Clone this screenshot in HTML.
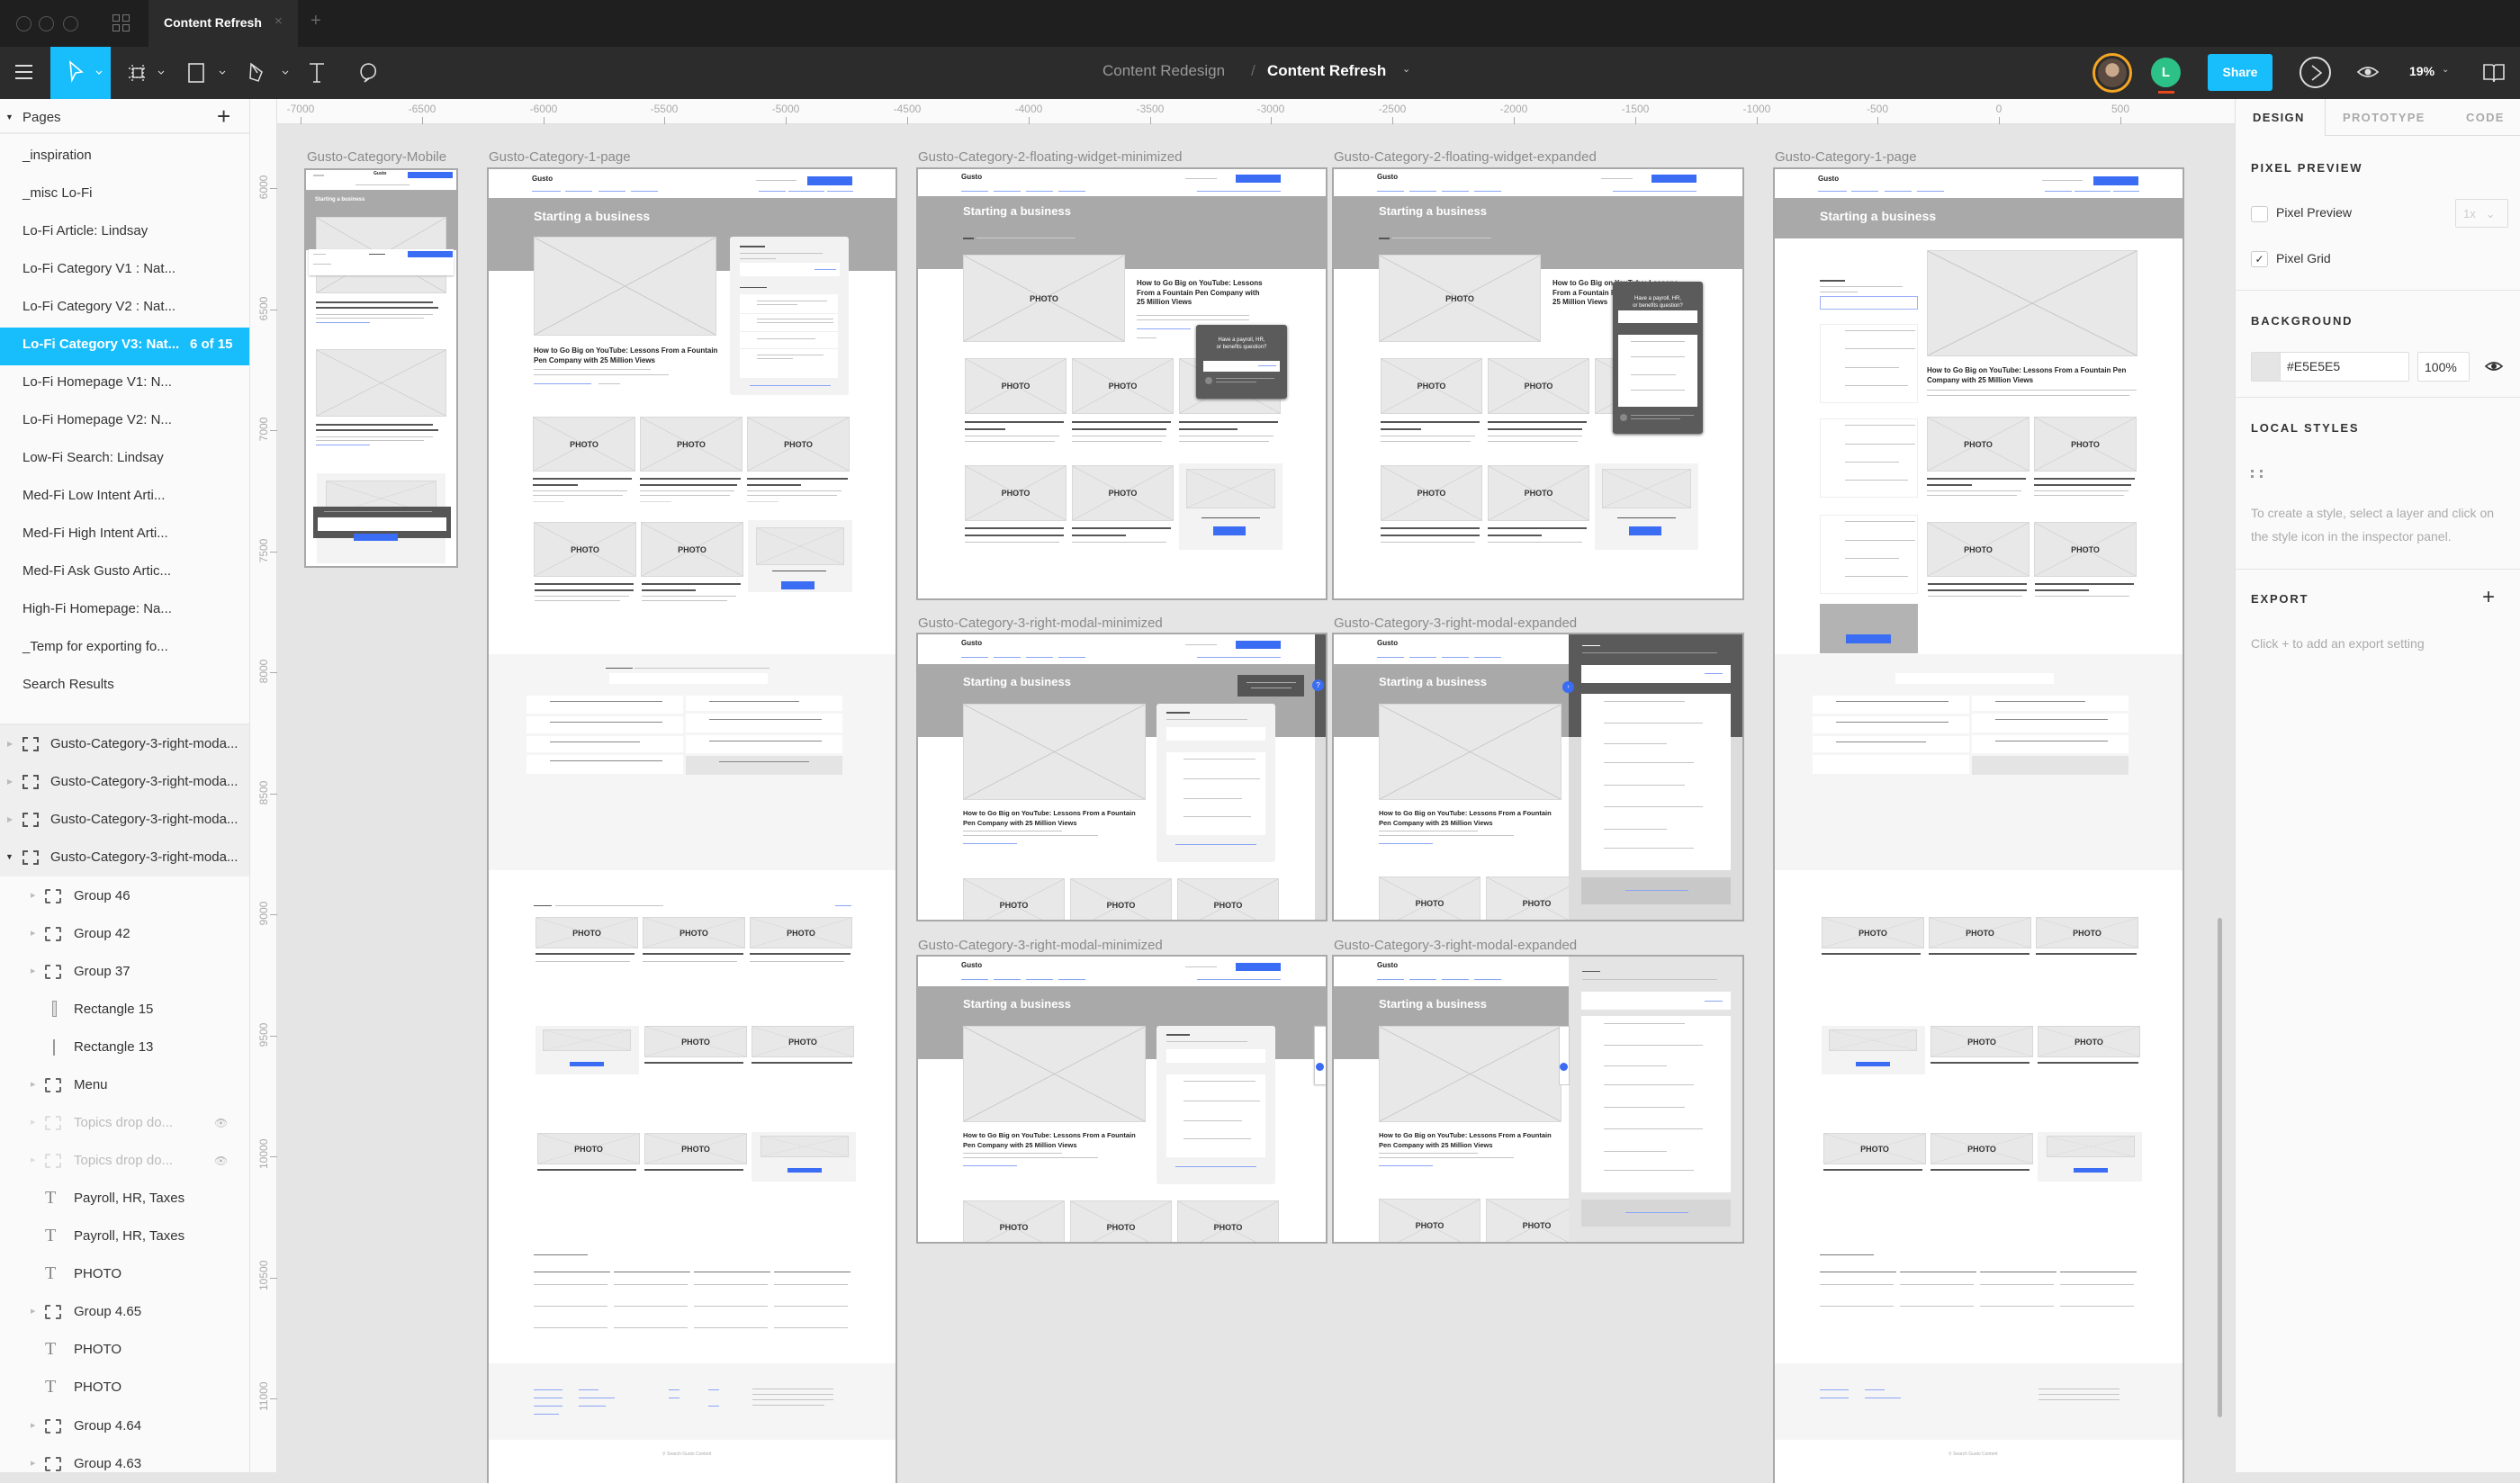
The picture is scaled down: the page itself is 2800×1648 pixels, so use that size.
<!DOCTYPE html>
<html><head><meta charset="utf-8">
<style>
*{box-sizing:border-box;margin:0;padding:0}
body{width:2800px;height:1636px;overflow:hidden;background:#e5e5e5;font-family:"Liberation Sans",Arial,sans-serif;position:relative}
.a{position:absolute}
.x{position:absolute;background:linear-gradient(to top right,transparent 49.7%,#c4c4c4 49.85%,#c4c4c4 50.15%,transparent 50.3%),linear-gradient(to bottom right,transparent 49.7%,#c4c4c4 49.85%,#c4c4c4 50.15%,transparent 50.3%),#e8e8e8;border:1px solid #d8d8d8;display:flex;align-items:center;justify-content:center;font-size:9px;font-weight:bold;color:#333}
.b{position:absolute;height:2px;background:#c4c4c4}
.bb{position:absolute;height:2px;background:#8aa5f5}
.bk{position:absolute;height:3px;background:#555}
.btn{position:absolute;background:#3a6cf4}
.fr{position:absolute;background:#fff;outline:2px solid #a8a8a8;overflow:hidden}
.hero{position:absolute;left:0;right:0;background:#a9a9a9}
.ht{position:absolute;color:#fff;font-weight:bold;font-size:14px;white-space:nowrap}
.logo{position:absolute;font-size:8px;font-weight:bold;color:#222}
.hl{position:absolute;font-size:8px;font-weight:bold;color:#222;line-height:11px}
.lbl{position:absolute;font-size:15px;color:#8a8a8a;white-space:nowrap}
.card{position:absolute;background:#f2f2f2;border-radius:3px}
.wh{position:absolute;background:#fff}
.pg{position:absolute;left:25px;font-size:15px;color:#333;white-space:nowrap}
.ly{position:absolute;font-size:15px;color:#333;white-space:nowrap}
.rl{position:absolute;top:114px;width:60px;text-align:center;font-size:12px;color:#aaa}
.rt{position:absolute;top:130px;width:1px;height:8px;background:#aaa}
.vl{position:absolute;left:278px;width:30px;font-size:12px;color:#aaa;transform:rotate(-90deg);text-align:center}
.sh{position:absolute;left:2501px;font-size:13px;font-weight:bold;letter-spacing:1.8px;color:#333}
.fi{position:absolute;width:18px;height:16px;border:2px dashed #555}
.gi{position:absolute;width:18px;height:16px;border:2px dashed #666;border-radius:2px}
</style></head><body>

<!-- title bar -->
<div class="a" style="left:0;top:0;width:2800px;height:52px;background:#1f1f1f"></div>
<div class="a" style="left:18px;top:18px;width:17px;height:17px;border:1.5px solid #555;border-radius:50%"></div>
<div class="a" style="left:43px;top:18px;width:17px;height:17px;border:1.5px solid #555;border-radius:50%"></div>
<div class="a" style="left:70px;top:18px;width:17px;height:17px;border:1.5px solid #555;border-radius:50%"></div>
<div class="a" style="left:125px;top:16px;width:8px;height:8px;border:1.5px solid #777"></div>
<div class="a" style="left:136px;top:16px;width:8px;height:8px;border:1.5px solid #777"></div>
<div class="a" style="left:125px;top:27px;width:8px;height:8px;border:1.5px solid #777"></div>
<div class="a" style="left:136px;top:27px;width:8px;height:8px;border:1.5px solid #777"></div>
<div class="a" style="left:165px;top:0;width:166px;height:52px;background:#2c2c2c"></div>
<div class="a" style="left:182px;top:17px;font-size:14px;font-weight:bold;color:#fff">Content Refresh</div>
<div class="a" style="left:305px;top:15px;font-size:15px;color:#666">×</div>
<div class="a" style="left:345px;top:12px;font-size:20px;color:#666">+</div>

<!-- toolbar -->
<div class="a" style="left:0;top:52px;width:2800px;height:58px;background:#2c2c2c"></div>
<div class="a" style="left:17px;top:72px;width:19px;height:2px;background:#ddd;box-shadow:0 7px 0 #ddd,0 14px 0 #ddd"></div>
<div class="a" style="left:56px;top:52px;width:67px;height:58px;background:#18bdfb"></div>
<svg class="a" style="left:72px;top:66px" width="50" height="30" viewBox="0 0 50 30"><path d="M6 3 L19 14 L12 15 L8 23 Z" fill="none" stroke="#fff" stroke-width="1.6"/><path d="M35 13 l3 3 l3 -3" fill="none" stroke="#fff" stroke-width="1.2"/></svg>
<svg class="a" style="left:140px;top:66px" width="340" height="30" viewBox="0 0 340 30"><path d="M7 6 v18 M19 6 v18 M3 10 h20 M3 20 h20" stroke="#ddd" stroke-width="1.4" stroke-dasharray="2 2" fill="none"/><rect x="8" y="10" width="10" height="10" fill="none" stroke="#ddd" stroke-width="1.4"/><path d="M36 13 l3 3 l3-3" stroke="#ddd" fill="none"/>
<rect x="70" y="5" width="16" height="20" fill="none" stroke="#ddd" stroke-width="1.6"/><path d="M104 13 l3 3 l3-3" stroke="#ddd" fill="none"/>
<path d="M139 5 l12 9 l-4 10 l-9-3 z M140 6 l6 9" fill="none" stroke="#ddd" stroke-width="1.5"/><path d="M174 13 l3 3 l3-3" stroke="#ddd" fill="none"/>
<path d="M204 5 h16 M212 5 v20 M208 25 h8" stroke="#ddd" stroke-width="1.6" fill="none"/>
<path d="M269 22 c-10 0 -11 -16 0 -17 c11 0 11 16 0 16 l-4 4 z" fill="none" stroke="#ddd" stroke-width="1.6"/></svg>
<div class="a" style="left:1225px;top:69px;font-size:17px;color:#999">Content Redesign</div>
<div class="a" style="left:1390px;top:69px;font-size:17px;color:#666">/</div>
<div class="a" style="left:1408px;top:69px;font-size:17px;font-weight:bold;color:#fff">Content Refresh</div>
<div class="a" style="left:1558px;top:70px;font-size:11px;color:#ccc">⌄</div>
<div class="a" style="left:2325px;top:59px;width:44px;height:44px;border:3px solid #f5a623;border-radius:50%;background:#2c2c2c"></div>
<div class="a" style="left:2331px;top:65px;width:32px;height:32px;border-radius:50%;background:radial-gradient(circle at 50% 40%,#c9a88c 0 30%,#5a4a40 31% 100%)"></div>
<div class="a" style="left:2390px;top:64px;width:33px;height:33px;border-radius:50%;background:#2cc287;color:#fff;font-size:15px;font-weight:bold;text-align:center;line-height:33px">L</div>
<div class="a" style="left:2398px;top:101px;width:18px;height:3px;background:#e8481c"></div>
<div class="a" style="left:2453px;top:60px;width:72px;height:41px;background:#18bdfb;border-radius:3px;color:#fff;font-weight:bold;font-size:14px;text-align:center;line-height:41px">Share</div>
<div class="a" style="left:2555px;top:63px;width:35px;height:35px;border:2px solid #ddd;border-radius:50%"></div>
<svg class="a" style="left:2566px;top:71px" width="16" height="20"><path d="M3 2 L13 10 L3 18" fill="none" stroke="#ddd" stroke-width="1.6"/></svg>
<svg class="a" style="left:2618px;top:70px" width="26" height="20"><path d="M2 10 Q13 0 24 10 Q13 20 2 10 Z" fill="none" stroke="#ddd" stroke-width="1.6"/><circle cx="13" cy="10" r="3.5" fill="#ddd"/></svg>
<div class="a" style="left:2677px;top:71px;font-size:14px;font-weight:bold;color:#fff">19%</div>
<div class="a" style="left:2713px;top:72px;font-size:10px;color:#ccc">⌄</div>
<svg class="a" style="left:2758px;top:69px" width="26" height="24"><path d="M2 3 h8 q3 0 3 3 v16 q0 -3 -3 -3 h-8 z M24 3 h-8 q-3 0 -3 3 v16 q0 -3 3 -3 h8 z" fill="none" stroke="#ddd" stroke-width="1.6"/></svg>

<!-- left panel -->
<div class="a" style="left:0;top:110px;width:278px;height:1526px;background:#fafafa"></div>
<div class="a" style="left:0;top:147px;width:278px;height:2px;background:#eaeaea"></div>
<div class="a" style="left:6px;top:125px;font-size:9px;color:#333">▼</div>
<div class="a" style="left:25px;top:122px;font-size:15px;color:#333">Pages</div>
<div class="a" style="left:241px;top:114px;font-size:26px;font-weight:300;color:#333">+</div>
<div class="pg" style="top:164px">_inspiration</div>
<div class="pg" style="top:206px">_misc Lo-Fi</div>
<div class="pg" style="top:248px">Lo-Fi Article: Lindsay</div>
<div class="pg" style="top:290px">Lo-Fi Category V1 : Nat...</div>
<div class="pg" style="top:332px">Lo-Fi Category V2 : Nat...</div>
<div class="a" style="left:0;top:364px;width:278px;height:42px;background:#18bdfb"></div>
<div class="pg" style="top:374px;color:#fff;font-weight:bold">Lo-Fi Category V3: Nat...</div>
<div class="a" style="left:211px;top:374px;font-size:15px;color:#fff;font-weight:bold">6 of 15</div>
<div class="pg" style="top:416px">Lo-Fi Homepage V1: N...</div>
<div class="pg" style="top:458px">Lo-Fi Homepage V2: N...</div>
<div class="pg" style="top:500px">Low-Fi Search: Lindsay</div>
<div class="pg" style="top:542px">Med-Fi Low Intent Arti...</div>
<div class="pg" style="top:584px">Med-Fi High Intent Arti...</div>
<div class="pg" style="top:626px">Med-Fi Ask Gusto Artic...</div>
<div class="pg" style="top:668px">High-Fi Homepage: Na...</div>
<div class="pg" style="top:710px">_Temp for exporting fo...</div>
<div class="pg" style="top:752px">Search Results</div>
<div class="a" style="left:0;top:804px;width:278px;height:2px;background:#eaeaea"></div>
<div class="a" style="left:0;top:806px;width:278px;height:168px;background:#efefef"></div>
<div class="a" style="left:8px;top:822px;font-size:8px;color:#bbb">▶</div><div class="fi" style="left:25px;top:819px"></div><div class="ly" style="left:56px;top:818px">Gusto-Category-3-right-moda...</div>
<div class="a" style="left:8px;top:864px;font-size:8px;color:#bbb">▶</div><div class="fi" style="left:25px;top:861px"></div><div class="ly" style="left:56px;top:860px">Gusto-Category-3-right-moda...</div>
<div class="a" style="left:8px;top:906px;font-size:8px;color:#bbb">▶</div><div class="fi" style="left:25px;top:903px"></div><div class="ly" style="left:56px;top:902px">Gusto-Category-3-right-moda...</div>
<div class="a" style="left:6px;top:947px;font-size:9px;color:#333">▼</div><div class="fi" style="left:25px;top:945px"></div><div class="ly" style="left:56px;top:944px">Gusto-Category-3-right-moda...</div>
<div class="a" style="left:34px;top:991px;font-size:7px;color:#bbb">▶</div><div class="gi" style="left:50px;top:988px"></div><div class="ly" style="left:82px;top:987px">Group 46</div>
<div class="a" style="left:34px;top:1033px;font-size:7px;color:#bbb">▶</div><div class="gi" style="left:50px;top:1030px"></div><div class="ly" style="left:82px;top:1029px">Group 42</div>
<div class="a" style="left:34px;top:1075px;font-size:7px;color:#bbb">▶</div><div class="gi" style="left:50px;top:1072px"></div><div class="ly" style="left:82px;top:1071px">Group 37</div>
<div class="a" style="left:58px;top:1112px;width:5px;height:18px;border:1px solid #999;background:#ddd"></div><div class="ly" style="left:82px;top:1113px">Rectangle 15</div>
<div class="a" style="left:59px;top:1155px;width:2px;height:18px;background:#999"></div><div class="ly" style="left:82px;top:1155px">Rectangle 13</div>
<div class="a" style="left:34px;top:1201px;font-size:7px;color:#bbb">▶</div><div class="gi" style="left:50px;top:1198px"></div><div class="ly" style="left:82px;top:1197px">Menu</div>
<div class="a" style="left:34px;top:1243px;font-size:7px;color:#ddd">▶</div><div class="gi" style="left:50px;top:1240px;border-color:#ddd"></div><div class="ly" style="left:82px;top:1239px;color:#bbb">Topics drop do...</div><div class="a" style="left:238px;top:1241px;font-size:12px;color:#bbb">👁︎</div>
<div class="a" style="left:34px;top:1285px;font-size:7px;color:#ddd">▶</div><div class="gi" style="left:50px;top:1282px;border-color:#ddd"></div><div class="ly" style="left:82px;top:1281px;color:#bbb">Topics drop do...</div><div class="a" style="left:238px;top:1283px;font-size:12px;color:#bbb">👁︎</div>
<div class="ly" style="left:50px;top:1320px;font-size:20px;color:#888;font-family:'Liberation Serif',serif">T</div><div class="ly" style="left:82px;top:1323px">Payroll, HR, Taxes</div>
<div class="ly" style="left:50px;top:1362px;font-size:20px;color:#888;font-family:'Liberation Serif',serif">T</div><div class="ly" style="left:82px;top:1365px">Payroll, HR, Taxes</div>
<div class="ly" style="left:50px;top:1404px;font-size:20px;color:#888;font-family:'Liberation Serif',serif">T</div><div class="ly" style="left:82px;top:1407px">PHOTO</div>
<div class="a" style="left:34px;top:1453px;font-size:7px;color:#bbb">▶</div><div class="gi" style="left:50px;top:1450px"></div><div class="ly" style="left:82px;top:1449px">Group 4.65</div>
<div class="ly" style="left:50px;top:1488px;font-size:20px;color:#888;font-family:'Liberation Serif',serif">T</div><div class="ly" style="left:82px;top:1491px">PHOTO</div>
<div class="ly" style="left:50px;top:1530px;font-size:20px;color:#888;font-family:'Liberation Serif',serif">T</div><div class="ly" style="left:82px;top:1533px">PHOTO</div>
<div class="a" style="left:34px;top:1580px;font-size:7px;color:#bbb">▶</div><div class="gi" style="left:50px;top:1577px"></div><div class="ly" style="left:82px;top:1576px">Group 4.64</div>
<div class="a" style="left:34px;top:1622px;font-size:7px;color:#bbb">▶</div><div class="gi" style="left:50px;top:1619px"></div><div class="ly" style="left:82px;top:1618px">Group 4.63</div>
<div class="a" style="left:277px;top:110px;width:1px;height:1526px;background:#e2e2e2"></div>

<!-- rulers -->
<div class="a" style="left:278px;top:110px;width:2205px;height:28px;background:#fafafa;border-bottom:1px solid #e0e0e0"></div>
<div class="a" style="left:278px;top:110px;width:30px;height:1526px;background:#fafafa;border-right:1px solid #e0e0e0"></div>
<div class="rl" style="left:304px">-7000</div><div class="rt" style="left:334px"></div>
<div class="rl" style="left:439px">-6500</div><div class="rt" style="left:469px"></div>
<div class="rl" style="left:574px">-6000</div><div class="rt" style="left:604px"></div>
<div class="rl" style="left:708px">-5500</div><div class="rt" style="left:738px"></div>
<div class="rl" style="left:843px">-5000</div><div class="rt" style="left:873px"></div>
<div class="rl" style="left:978px">-4500</div><div class="rt" style="left:1008px"></div>
<div class="rl" style="left:1113px">-4000</div><div class="rt" style="left:1143px"></div>
<div class="rl" style="left:1248px">-3500</div><div class="rt" style="left:1278px"></div>
<div class="rl" style="left:1382px">-3000</div><div class="rt" style="left:1412px"></div>
<div class="rl" style="left:1517px">-2500</div><div class="rt" style="left:1547px"></div>
<div class="rl" style="left:1652px">-2000</div><div class="rt" style="left:1682px"></div>
<div class="rl" style="left:1787px">-1500</div><div class="rt" style="left:1817px"></div>
<div class="rl" style="left:1922px">-1000</div><div class="rt" style="left:1952px"></div>
<div class="rl" style="left:2056px">-500</div><div class="rt" style="left:2086px"></div>
<div class="rl" style="left:2191px">0</div><div class="rt" style="left:2221px"></div>
<div class="rl" style="left:2326px">500</div><div class="rt" style="left:2356px"></div>
<div class="vl" style="top:201px">6000</div><div class="a" style="left:300px;top:209px;width:8px;height:1px;background:#aaa"></div>
<div class="vl" style="top:336px">6500</div><div class="a" style="left:300px;top:344px;width:8px;height:1px;background:#aaa"></div>
<div class="vl" style="top:470px">7000</div><div class="a" style="left:300px;top:478px;width:8px;height:1px;background:#aaa"></div>
<div class="vl" style="top:605px">7500</div><div class="a" style="left:300px;top:613px;width:8px;height:1px;background:#aaa"></div>
<div class="vl" style="top:739px">8000</div><div class="a" style="left:300px;top:747px;width:8px;height:1px;background:#aaa"></div>
<div class="vl" style="top:874px">8500</div><div class="a" style="left:300px;top:882px;width:8px;height:1px;background:#aaa"></div>
<div class="vl" style="top:1008px">9000</div><div class="a" style="left:300px;top:1016px;width:8px;height:1px;background:#aaa"></div>
<div class="vl" style="top:1143px">9500</div><div class="a" style="left:300px;top:1151px;width:8px;height:1px;background:#aaa"></div>
<div class="vl" style="top:1277px">10000</div><div class="a" style="left:300px;top:1285px;width:8px;height:1px;background:#aaa"></div>
<div class="vl" style="top:1412px">10500</div><div class="a" style="left:300px;top:1420px;width:8px;height:1px;background:#aaa"></div>
<div class="vl" style="top:1546px">11000</div><div class="a" style="left:300px;top:1554px;width:8px;height:1px;background:#aaa"></div>

<!-- frame labels -->
<div class="lbl" style="left:341px;top:166px">Gusto-Category-Mobile</div>
<div class="lbl" style="left:543px;top:166px">Gusto-Category-1-page</div>
<div class="lbl" style="left:1020px;top:166px">Gusto-Category-2-floating-widget-minimized</div>
<div class="lbl" style="left:1482px;top:166px">Gusto-Category-2-floating-widget-expanded</div>
<div class="lbl" style="left:1972px;top:166px">Gusto-Category-1-page</div>
<div class="lbl" style="left:1020px;top:684px">Gusto-Category-3-right-modal-minimized</div>
<div class="lbl" style="left:1482px;top:684px">Gusto-Category-3-right-modal-expanded</div>
<div class="lbl" style="left:1020px;top:1042px">Gusto-Category-3-right-modal-minimized</div>
<div class="lbl" style="left:1482px;top:1042px">Gusto-Category-3-right-modal-expanded</div>

<!-- MOBILE -->
<div class="fr" style="left:340px;top:189px;width:167px;height:440px">
 <div class="b" style="left:8px;top:5px;width:12px"></div><div class="logo" style="left:75px;top:1px;font-size:5px">Gusto</div><div class="btn" style="left:113px;top:2px;width:50px;height:7px"></div>
 <div class="b" style="left:55px;top:16px;width:60px;height:1px"></div>
 <div class="hero" style="top:22px;height:67px"></div>
 <div class="ht" style="left:10px;top:30px;font-size:6px">Starting a business</div>
 <div class="x" style="left:11px;top:52px;width:145px;height:85px"></div>
 <div class="wh" style="left:3px;top:88px;width:161px;height:29px;box-shadow:0 1px 2px #bbb"></div>
 <div class="b" style="left:8px;top:93px;width:14px;height:1px"></div><div class="b" style="left:70px;top:93px;width:18px;height:1px;background:#555"></div><div class="btn" style="left:113px;top:90px;width:50px;height:7px"></div>
 <div class="b" style="left:8px;top:104px;width:20px;height:1px"></div>
 <div class="bk" style="left:11px;top:146px;width:130px;height:2px"></div><div class="bk" style="left:11px;top:152px;width:136px;height:2px"></div>
 <div class="b" style="left:11px;top:160px;width:130px;height:1px"></div><div class="b" style="left:11px;top:164px;width:120px;height:1px"></div><div class="bb" style="left:11px;top:169px;width:60px;height:1px"></div>
 <div class="x" style="left:11px;top:199px;width:145px;height:75px"></div>
 <div class="bk" style="left:11px;top:282px;width:130px;height:2px"></div><div class="bk" style="left:11px;top:288px;width:136px;height:2px"></div>
 <div class="b" style="left:11px;top:296px;width:130px;height:1px"></div><div class="b" style="left:11px;top:300px;width:120px;height:1px"></div><div class="bb" style="left:11px;top:305px;width:60px;height:1px"></div>
 <div class="a" style="left:12px;top:337px;width:143px;height:100px;background:#f3f3f3"></div>
 <div class="x" style="left:22px;top:345px;width:123px;height:40px"></div>
 <div class="a" style="left:8px;top:374px;width:153px;height:35px;background:#555"></div>
 <div class="b" style="left:20px;top:379px;width:120px;height:1px;background:#999"></div>
 <div class="wh" style="left:13px;top:386px;width:143px;height:15px"></div>
 <div class="btn" style="left:53px;top:404px;width:49px;height:8px"></div>
</div>

<!-- FRAME 1-page (left) -->
<div class="fr" style="left:543px;top:188px;width:452px;height:1460px">
 <div class="logo" style="left:48px;top:6px">Gusto</div>
 <div class="b" style="left:297px;top:12px;width:45px;height:1px"></div><div class="btn" style="left:354px;top:8px;width:50px;height:10px"></div>
 <div class="bb" style="left:48px;top:24px;width:32px;height:1px"></div><div class="bb" style="left:85px;top:24px;width:30px;height:1px"></div><div class="bb" style="left:122px;top:24px;width:30px;height:1px"></div><div class="bb" style="left:158px;top:24px;width:30px;height:1px"></div>
 <div class="bb" style="left:300px;top:24px;width:30px;height:1px"></div><div class="bb" style="left:333px;top:24px;width:40px;height:1px"></div><div class="bb" style="left:376px;top:24px;width:29px;height:1px"></div>
 <div class="hero" style="top:32px;height:81px"></div>
 <div class="ht" style="left:50px;top:44px">Starting a business</div>
 <div class="x" style="left:50px;top:75px;width:203px;height:110px"></div>
 <div class="hl" style="left:50px;top:196px;width:210px">How to Go Big on YouTube: Lessons From a Fountain Pen Company with 25 Million Views</div>
 <div class="b" style="left:50px;top:222px;width:130px;height:1px"></div><div class="b" style="left:50px;top:228px;width:150px;height:1px"></div><div class="bb" style="left:50px;top:238px;width:64px;height:1px"></div><div class="b" style="left:122px;top:238px;width:24px;height:1px"></div>
 <div class="card" style="left:268px;top:75px;width:132px;height:176px"></div>
 <div class="bk" style="left:279px;top:85px;width:28px;height:2px"></div><div class="b" style="left:279px;top:93px;width:92px;height:1px"></div><div class="b" style="left:279px;top:99px;width:40px;height:1px"></div>
 <div class="wh" style="left:279px;top:104px;width:111px;height:15px"></div><div class="bb" style="left:362px;top:111px;width:24px;height:1px"></div>
 <div class="bk" style="left:279px;top:131px;width:30px;height:1px"></div>
 <div class="wh" style="left:279px;top:139px;width:109px;height:93px"></div>
 <div class="b" style="left:298px;top:146px;width:78px;height:1px"></div><div class="b" style="left:298px;top:150px;width:45px;height:1px"></div><div class="a" style="left:279px;top:160px;width:109px;height:1px;background:#eee"></div>
 <div class="b" style="left:298px;top:166px;width:85px;height:1px"></div><div class="b" style="left:298px;top:170px;width:85px;height:1px"></div><div class="a" style="left:279px;top:180px;width:109px;height:1px;background:#eee"></div>
 <div class="b" style="left:298px;top:188px;width:65px;height:1px"></div><div class="a" style="left:279px;top:199px;width:109px;height:1px;background:#eee"></div>
 <div class="b" style="left:298px;top:206px;width:74px;height:1px"></div><div class="b" style="left:298px;top:210px;width:40px;height:1px"></div>
 <div class="bb" style="left:290px;top:240px;width:90px;height:1px"></div>
 <div class="x" style="left:49px;top:275px;width:114px;height:61px">PHOTO</div><div class="x" style="left:168px;top:275px;width:114px;height:61px">PHOTO</div><div class="x" style="left:287px;top:275px;width:114px;height:61px">PHOTO</div>
 <div class="bk" style="left:49px;top:343px;width:110px;height:2px"></div><div class="bk" style="left:49px;top:350px;width:50px;height:2px"></div><div class="b" style="left:49px;top:357px;width:105px;height:1px"></div><div class="b" style="left:49px;top:362px;width:100px;height:1px"></div><div class="b" style="left:49px;top:369px;width:35px;height:1px;background:#ddd"></div>
 <div class="bk" style="left:168px;top:343px;width:112px;height:2px"></div><div class="bk" style="left:168px;top:350px;width:108px;height:2px"></div><div class="b" style="left:168px;top:357px;width:105px;height:1px"></div><div class="b" style="left:168px;top:362px;width:100px;height:1px"></div><div class="b" style="left:168px;top:369px;width:35px;height:1px;background:#ddd"></div>
 <div class="bk" style="left:287px;top:343px;width:112px;height:2px"></div><div class="bk" style="left:287px;top:350px;width:60px;height:2px"></div><div class="b" style="left:287px;top:357px;width:105px;height:1px"></div><div class="b" style="left:287px;top:362px;width:100px;height:1px"></div><div class="b" style="left:287px;top:369px;width:35px;height:1px;background:#ddd"></div>
 <div class="x" style="left:50px;top:392px;width:114px;height:61px">PHOTO</div><div class="x" style="left:169px;top:392px;width:114px;height:61px">PHOTO</div>
 <div class="a" style="left:288px;top:390px;width:116px;height:80px;background:#f3f3f3"></div><div class="x" style="left:297px;top:398px;width:98px;height:42px"></div><div class="bk" style="left:315px;top:446px;width:60px;height:1px"></div><div class="btn" style="left:325px;top:458px;width:37px;height:9px"></div>
 <div class="bk" style="left:51px;top:460px;width:110px;height:2px"></div><div class="bk" style="left:51px;top:467px;width:110px;height:2px"></div><div class="b" style="left:51px;top:474px;width:105px;height:1px"></div><div class="b" style="left:51px;top:479px;width:95px;height:1px"></div>
 <div class="bk" style="left:170px;top:460px;width:110px;height:2px"></div><div class="bk" style="left:170px;top:467px;width:60px;height:2px"></div><div class="b" style="left:170px;top:474px;width:105px;height:1px"></div><div class="b" style="left:170px;top:479px;width:95px;height:1px"></div>
 <div class="a" style="left:0;top:539px;width:452px;height:240px;background:#f5f5f5"></div>
 <div class="bk" style="left:130px;top:554px;width:30px;height:1px"></div><div class="b" style="left:162px;top:554px;width:150px;height:1px"></div>
 <div class="wh" style="left:134px;top:560px;width:176px;height:12px"></div>
 <div class="wh" style="left:42px;top:585px;width:174px;height:20px"></div><div class="wh" style="left:219px;top:585px;width:174px;height:17px"></div>
 <div class="wh" style="left:42px;top:608px;width:174px;height:19px"></div><div class="wh" style="left:219px;top:605px;width:174px;height:21px"></div>
 <div class="wh" style="left:42px;top:630px;width:174px;height:18px"></div><div class="wh" style="left:219px;top:629px;width:174px;height:20px"></div>
 <div class="wh" style="left:42px;top:651px;width:174px;height:21px"></div><div class="a" style="left:219px;top:652px;width:174px;height:21px;background:#e4e4e4"></div>
 <div class="b" style="left:68px;top:591px;width:125px;height:1px;background:#888"></div><div class="b" style="left:245px;top:591px;width:100px;height:1px;background:#888"></div>
 <div class="b" style="left:68px;top:614px;width:125px;height:1px;background:#888"></div><div class="b" style="left:245px;top:611px;width:125px;height:1px;background:#888"></div>
 <div class="b" style="left:68px;top:636px;width:100px;height:1px;background:#888"></div><div class="b" style="left:245px;top:635px;width:125px;height:1px;background:#888"></div>
 <div class="b" style="left:68px;top:657px;width:125px;height:1px;background:#888"></div><div class="b" style="left:256px;top:658px;width:100px;height:1px;background:#888"></div>
 <div class="bk" style="left:50px;top:818px;width:20px;height:1px"></div><div class="b" style="left:74px;top:818px;width:120px;height:1px"></div><div class="bb" style="left:385px;top:818px;width:18px;height:1px"></div>
 <div class="x" style="left:52px;top:831px;width:114px;height:35px">PHOTO</div><div class="x" style="left:171px;top:831px;width:114px;height:35px">PHOTO</div><div class="x" style="left:290px;top:831px;width:114px;height:35px">PHOTO</div>
 <div class="bk" style="left:52px;top:871px;width:110px;height:2px"></div><div class="bk" style="left:171px;top:871px;width:112px;height:2px"></div><div class="bk" style="left:290px;top:871px;width:112px;height:2px"></div>
 <div class="b" style="left:52px;top:880px;width:105px;height:1px"></div><div class="b" style="left:171px;top:880px;width:105px;height:1px"></div><div class="b" style="left:290px;top:880px;width:105px;height:1px"></div>
 <div class="a" style="left:52px;top:952px;width:115px;height:54px;background:#f3f3f3"></div><div class="x" style="left:60px;top:956px;width:98px;height:24px"></div><div class="btn" style="left:90px;top:992px;width:38px;height:5px"></div>
 <div class="x" style="left:173px;top:952px;width:114px;height:35px">PHOTO</div><div class="x" style="left:292px;top:952px;width:114px;height:35px">PHOTO</div>
 <div class="bk" style="left:173px;top:992px;width:110px;height:2px"></div><div class="bk" style="left:292px;top:992px;width:112px;height:2px"></div>
 <div class="x" style="left:54px;top:1071px;width:114px;height:35px">PHOTO</div><div class="x" style="left:173px;top:1071px;width:114px;height:35px">PHOTO</div>
 <div class="a" style="left:292px;top:1070px;width:116px;height:55px;background:#f3f3f3"></div><div class="x" style="left:302px;top:1074px;width:98px;height:24px"></div><div class="btn" style="left:332px;top:1110px;width:38px;height:5px"></div>
 <div class="bk" style="left:54px;top:1111px;width:110px;height:2px"></div><div class="bk" style="left:173px;top:1111px;width:110px;height:2px"></div>
 <div class="b" style="left:50px;top:1206px;width:60px;height:1px;background:#777"></div>
 <div class="b" style="left:50px;top:1225px;width:85px;height:1px;background:#777"></div><div class="b" style="left:139px;top:1225px;width:85px;height:1px;background:#777"></div><div class="b" style="left:228px;top:1225px;width:85px;height:1px;background:#777"></div><div class="b" style="left:317px;top:1225px;width:85px;height:1px;background:#777"></div>
 <div class="b" style="left:50px;top:1239px;width:82px;height:1px"></div><div class="b" style="left:139px;top:1239px;width:82px;height:1px"></div><div class="b" style="left:228px;top:1239px;width:82px;height:1px"></div><div class="b" style="left:317px;top:1239px;width:82px;height:1px"></div>
 <div class="b" style="left:50px;top:1263px;width:82px;height:1px"></div><div class="b" style="left:139px;top:1263px;width:82px;height:1px"></div><div class="b" style="left:228px;top:1263px;width:82px;height:1px"></div><div class="b" style="left:317px;top:1263px;width:82px;height:1px"></div>
 <div class="b" style="left:50px;top:1287px;width:82px;height:1px"></div><div class="b" style="left:139px;top:1287px;width:82px;height:1px"></div><div class="b" style="left:228px;top:1287px;width:82px;height:1px"></div><div class="b" style="left:317px;top:1287px;width:82px;height:1px"></div>
 <div class="a" style="left:0;top:1327px;width:452px;height:85px;background:#f5f5f5"></div>
 <div class="bb" style="left:50px;top:1356px;width:32px;height:1px"></div><div class="bb" style="left:100px;top:1356px;width:22px;height:1px"></div><div class="bb" style="left:50px;top:1365px;width:32px;height:1px"></div><div class="bb" style="left:100px;top:1365px;width:40px;height:1px"></div><div class="bb" style="left:50px;top:1374px;width:32px;height:1px"></div><div class="bb" style="left:100px;top:1374px;width:30px;height:1px"></div><div class="bb" style="left:50px;top:1383px;width:28px;height:1px"></div>
 <div class="bb" style="left:200px;top:1356px;width:12px;height:1px"></div><div class="bb" style="left:244px;top:1356px;width:12px;height:1px"></div><div class="bb" style="left:200px;top:1365px;width:12px;height:1px"></div><div class="bb" style="left:244px;top:1374px;width:12px;height:1px"></div>
 <div class="b" style="left:293px;top:1355px;width:90px;height:1px"></div><div class="b" style="left:293px;top:1361px;width:90px;height:1px"></div><div class="b" style="left:293px;top:1367px;width:90px;height:1px"></div><div class="b" style="left:293px;top:1373px;width:80px;height:1px"></div>
 <div class="a" style="left:193px;top:1425px;font-size:5px;color:#aaa">⚲ Search Gusto Content</div>
</div>

<!-- FRAME 1-page (right) -->
<div class="fr" style="left:1972px;top:188px;width:453px;height:1460px">
 <div class="logo" style="left:48px;top:6px">Gusto</div>
 <div class="b" style="left:297px;top:12px;width:45px;height:1px"></div><div class="btn" style="left:354px;top:8px;width:50px;height:10px"></div>
 <div class="bb" style="left:48px;top:24px;width:32px;height:1px"></div><div class="bb" style="left:85px;top:24px;width:30px;height:1px"></div><div class="bb" style="left:122px;top:24px;width:30px;height:1px"></div><div class="bb" style="left:158px;top:24px;width:30px;height:1px"></div>
 <div class="bb" style="left:300px;top:24px;width:30px;height:1px"></div><div class="bb" style="left:333px;top:24px;width:40px;height:1px"></div><div class="bb" style="left:376px;top:24px;width:29px;height:1px"></div>
 <div class="hero" style="top:32px;height:45px"></div>
 <div class="ht" style="left:50px;top:44px">Starting a business</div>
 <div class="bk" style="left:50px;top:123px;width:28px;height:2px"></div><div class="b" style="left:50px;top:130px;width:92px;height:1px"></div><div class="b" style="left:50px;top:136px;width:42px;height:1px"></div>
 <div class="wh" style="left:50px;top:141px;width:109px;height:15px;border:1px solid #9bb2f7"></div>
 <div class="wh" style="left:50px;top:172px;width:109px;height:88px;border:1px solid #eee"></div>
 <div class="wh" style="left:50px;top:277px;width:109px;height:88px;border:1px solid #eee"></div>
 <div class="wh" style="left:50px;top:384px;width:109px;height:88px;border:1px solid #eee"></div>
 <div class="b" style="left:78px;top:179px;width:78px;height:1px"></div><div class="b" style="left:78px;top:199px;width:78px;height:1px"></div><div class="b" style="left:78px;top:220px;width:60px;height:1px"></div><div class="b" style="left:78px;top:240px;width:70px;height:1px"></div>
 <div class="b" style="left:78px;top:284px;width:78px;height:1px"></div><div class="b" style="left:78px;top:305px;width:78px;height:1px"></div><div class="b" style="left:78px;top:325px;width:60px;height:1px"></div><div class="b" style="left:78px;top:345px;width:70px;height:1px"></div>
 <div class="b" style="left:78px;top:391px;width:78px;height:1px"></div><div class="b" style="left:78px;top:412px;width:78px;height:1px"></div><div class="b" style="left:78px;top:432px;width:60px;height:1px"></div><div class="b" style="left:78px;top:452px;width:70px;height:1px"></div>
 <div class="a" style="left:50px;top:483px;width:109px;height:55px;background:#b3b3b3"></div><div class="btn" style="left:79px;top:517px;width:50px;height:10px"></div>
 <div class="x" style="left:169px;top:90px;width:234px;height:118px"></div>
 <div class="hl" style="left:169px;top:218px;width:240px">How to Go Big on YouTube: Lessons From a Fountain Pen Company with 25 Million Views</div>
 <div class="b" style="left:169px;top:245px;width:233px;height:1px"></div><div class="b" style="left:169px;top:251px;width:225px;height:1px"></div>
 <div class="x" style="left:169px;top:275px;width:114px;height:61px">PHOTO</div><div class="x" style="left:288px;top:275px;width:114px;height:61px">PHOTO</div>
 <div class="bk" style="left:169px;top:343px;width:110px;height:2px"></div><div class="bk" style="left:169px;top:350px;width:50px;height:2px"></div><div class="b" style="left:169px;top:357px;width:105px;height:1px"></div><div class="b" style="left:169px;top:362px;width:100px;height:1px"></div>
 <div class="bk" style="left:288px;top:343px;width:112px;height:2px"></div><div class="bk" style="left:288px;top:350px;width:108px;height:2px"></div><div class="b" style="left:288px;top:357px;width:105px;height:1px"></div><div class="b" style="left:288px;top:362px;width:100px;height:1px"></div>
 <div class="x" style="left:169px;top:392px;width:114px;height:61px">PHOTO</div><div class="x" style="left:288px;top:392px;width:114px;height:61px">PHOTO</div>
 <div class="bk" style="left:170px;top:460px;width:110px;height:2px"></div><div class="bk" style="left:170px;top:467px;width:110px;height:2px"></div><div class="b" style="left:170px;top:474px;width:105px;height:1px"></div>
 <div class="bk" style="left:289px;top:460px;width:110px;height:2px"></div><div class="bk" style="left:289px;top:467px;width:60px;height:2px"></div><div class="b" style="left:289px;top:474px;width:105px;height:1px"></div>
 <div class="a" style="left:0;top:539px;width:453px;height:240px;background:#f5f5f5"></div>
 <div class="wh" style="left:134px;top:560px;width:176px;height:12px"></div>
 <div class="wh" style="left:42px;top:585px;width:174px;height:20px"></div><div class="wh" style="left:219px;top:585px;width:174px;height:17px"></div>
 <div class="wh" style="left:42px;top:608px;width:174px;height:19px"></div><div class="wh" style="left:219px;top:605px;width:174px;height:21px"></div>
 <div class="wh" style="left:42px;top:630px;width:174px;height:18px"></div><div class="wh" style="left:219px;top:629px;width:174px;height:20px"></div>
 <div class="wh" style="left:42px;top:651px;width:174px;height:21px"></div><div class="a" style="left:219px;top:652px;width:174px;height:21px;background:#e4e4e4"></div>
 <div class="b" style="left:68px;top:591px;width:125px;height:1px;background:#888"></div><div class="b" style="left:245px;top:591px;width:100px;height:1px;background:#888"></div>
 <div class="b" style="left:68px;top:614px;width:125px;height:1px;background:#888"></div><div class="b" style="left:245px;top:611px;width:125px;height:1px;background:#888"></div>
 <div class="b" style="left:68px;top:636px;width:100px;height:1px;background:#888"></div><div class="b" style="left:245px;top:635px;width:125px;height:1px;background:#888"></div>
 <div class="x" style="left:52px;top:831px;width:114px;height:35px">PHOTO</div><div class="x" style="left:171px;top:831px;width:114px;height:35px">PHOTO</div><div class="x" style="left:290px;top:831px;width:114px;height:35px">PHOTO</div>
 <div class="bk" style="left:52px;top:871px;width:110px;height:2px"></div><div class="bk" style="left:171px;top:871px;width:112px;height:2px"></div><div class="bk" style="left:290px;top:871px;width:112px;height:2px"></div>
 <div class="a" style="left:52px;top:952px;width:115px;height:54px;background:#f3f3f3"></div><div class="x" style="left:60px;top:956px;width:98px;height:24px"></div><div class="btn" style="left:90px;top:992px;width:38px;height:5px"></div>
 <div class="x" style="left:173px;top:952px;width:114px;height:35px">PHOTO</div><div class="x" style="left:292px;top:952px;width:114px;height:35px">PHOTO</div>
 <div class="bk" style="left:173px;top:992px;width:110px;height:2px"></div><div class="bk" style="left:292px;top:992px;width:112px;height:2px"></div>
 <div class="x" style="left:54px;top:1071px;width:114px;height:35px">PHOTO</div><div class="x" style="left:173px;top:1071px;width:114px;height:35px">PHOTO</div>
 <div class="a" style="left:292px;top:1070px;width:116px;height:55px;background:#f3f3f3"></div><div class="x" style="left:302px;top:1074px;width:98px;height:24px"></div><div class="btn" style="left:332px;top:1110px;width:38px;height:5px"></div>
 <div class="bk" style="left:54px;top:1111px;width:110px;height:2px"></div><div class="bk" style="left:173px;top:1111px;width:110px;height:2px"></div>
 <div class="b" style="left:50px;top:1206px;width:60px;height:1px;background:#777"></div>
 <div class="b" style="left:50px;top:1225px;width:85px;height:1px;background:#777"></div><div class="b" style="left:139px;top:1225px;width:85px;height:1px;background:#777"></div><div class="b" style="left:228px;top:1225px;width:85px;height:1px;background:#777"></div><div class="b" style="left:317px;top:1225px;width:85px;height:1px;background:#777"></div>
 <div class="b" style="left:50px;top:1239px;width:82px;height:1px"></div><div class="b" style="left:139px;top:1239px;width:82px;height:1px"></div><div class="b" style="left:228px;top:1239px;width:82px;height:1px"></div><div class="b" style="left:317px;top:1239px;width:82px;height:1px"></div>
 <div class="b" style="left:50px;top:1263px;width:82px;height:1px"></div><div class="b" style="left:139px;top:1263px;width:82px;height:1px"></div><div class="b" style="left:228px;top:1263px;width:82px;height:1px"></div><div class="b" style="left:317px;top:1263px;width:82px;height:1px"></div>
 <div class="a" style="left:0;top:1327px;width:453px;height:85px;background:#f5f5f5"></div>
 <div class="bb" style="left:50px;top:1356px;width:32px;height:1px"></div><div class="bb" style="left:100px;top:1356px;width:22px;height:1px"></div><div class="bb" style="left:50px;top:1365px;width:32px;height:1px"></div><div class="bb" style="left:100px;top:1365px;width:40px;height:1px"></div>
 <div class="b" style="left:293px;top:1355px;width:90px;height:1px"></div><div class="b" style="left:293px;top:1361px;width:90px;height:1px"></div><div class="b" style="left:293px;top:1367px;width:90px;height:1px"></div>
 <div class="a" style="left:193px;top:1425px;font-size:5px;color:#aaa">⚲ Search Gusto Content</div>
</div>

<!-- FRAME 2 minimized -->
<div class="fr" style="left:1020px;top:188px;width:453px;height:477px">
 <div class="logo" style="left:48px;top:4px">Gusto</div><div class="b" style="left:297px;top:10px;width:35px;height:1px"></div><div class="btn" style="left:353px;top:6px;width:50px;height:9px"></div>
 <div class="bb" style="left:48px;top:24px;width:30px;height:1px"></div><div class="bb" style="left:84px;top:24px;width:30px;height:1px"></div><div class="bb" style="left:120px;top:24px;width:30px;height:1px"></div><div class="bb" style="left:156px;top:24px;width:30px;height:1px"></div><div class="bb" style="left:310px;top:24px;width:93px;height:1px"></div>
 <div class="hero" style="top:30px;height:81px"></div>
 <div class="ht" style="left:50px;top:39px;font-size:13px">Starting a business</div>
 <div class="bk" style="left:50px;top:76px;width:12px;height:2px"></div><div class="b" style="left:65px;top:76px;width:110px;height:1px;background:#ccc"></div>
 <div class="x" style="left:50px;top:95px;width:180px;height:97px">PHOTO</div>
 <div class="hl" style="left:243px;top:122px;width:140px;line-height:10.5px">How to Go Big on YouTube: Lessons From a Fountain Pen Company with 25 Million Views</div>
 <div class="b" style="left:243px;top:162px;width:125px;height:1px"></div><div class="b" style="left:243px;top:167px;width:125px;height:1px"></div><div class="bb" style="left:243px;top:177px;width:60px;height:1px"></div><div class="b" style="left:243px;top:187px;width:22px;height:1px"></div>
 <div class="x" style="left:52px;top:210px;width:113px;height:62px">PHOTO</div><div class="x" style="left:171px;top:210px;width:113px;height:62px">PHOTO</div><div class="x" style="left:290px;top:210px;width:113px;height:62px">PHOTO</div>
 <div class="bk" style="left:52px;top:280px;width:110px;height:2px"></div><div class="bk" style="left:52px;top:288px;width:45px;height:2px"></div><div class="b" style="left:52px;top:296px;width:105px;height:1px"></div><div class="b" style="left:52px;top:302px;width:100px;height:1px"></div>
 <div class="bk" style="left:171px;top:280px;width:110px;height:2px"></div><div class="bk" style="left:171px;top:288px;width:105px;height:2px"></div><div class="b" style="left:171px;top:296px;width:105px;height:1px"></div><div class="b" style="left:171px;top:302px;width:100px;height:1px"></div>
 <div class="bk" style="left:290px;top:280px;width:110px;height:2px"></div><div class="bk" style="left:290px;top:288px;width:65px;height:2px"></div><div class="b" style="left:290px;top:296px;width:105px;height:1px"></div><div class="b" style="left:290px;top:302px;width:100px;height:1px"></div>
 <div class="x" style="left:52px;top:329px;width:113px;height:62px">PHOTO</div><div class="x" style="left:171px;top:329px;width:113px;height:62px">PHOTO</div>
 <div class="a" style="left:290px;top:327px;width:115px;height:96px;background:#f3f3f3"></div><div class="x" style="left:298px;top:333px;width:99px;height:44px"></div><div class="bk" style="left:315px;top:387px;width:65px;height:1px"></div><div class="btn" style="left:328px;top:397px;width:36px;height:10px"></div>
 <div class="bk" style="left:52px;top:398px;width:110px;height:2px"></div><div class="bk" style="left:52px;top:406px;width:110px;height:2px"></div><div class="b" style="left:52px;top:414px;width:105px;height:1px"></div>
 <div class="bk" style="left:171px;top:398px;width:110px;height:2px"></div><div class="bk" style="left:171px;top:406px;width:60px;height:2px"></div><div class="b" style="left:171px;top:414px;width:105px;height:1px"></div>
 <div class="a" style="left:309px;top:173px;width:101px;height:82px;background:#5b5b5b;border-radius:3px;box-shadow:0 1px 3px #666"></div>
 <div class="a" style="left:309px;top:186px;width:101px;text-align:center;color:#fff;font-size:6px;line-height:8px">Have a payroll, HR,<br>or benefits question?</div>
 <div class="wh" style="left:317px;top:213px;width:85px;height:12px"></div><div class="bb" style="left:378px;top:218px;width:20px;height:1px"></div>
 <div class="a" style="left:319px;top:231px;width:8px;height:8px;border-radius:50%;background:#888"></div><div class="b" style="left:331px;top:232px;width:65px;height:1px;background:#999"></div><div class="b" style="left:331px;top:236px;width:45px;height:1px;background:#999"></div>
</div>

<!-- FRAME 2 expanded -->
<div class="fr" style="left:1482px;top:188px;width:454px;height:477px">
 <div class="logo" style="left:48px;top:4px">Gusto</div><div class="b" style="left:297px;top:10px;width:35px;height:1px"></div><div class="btn" style="left:353px;top:6px;width:50px;height:9px"></div>
 <div class="bb" style="left:48px;top:24px;width:30px;height:1px"></div><div class="bb" style="left:84px;top:24px;width:30px;height:1px"></div><div class="bb" style="left:120px;top:24px;width:30px;height:1px"></div><div class="bb" style="left:156px;top:24px;width:30px;height:1px"></div><div class="bb" style="left:310px;top:24px;width:93px;height:1px"></div>
 <div class="hero" style="top:30px;height:81px"></div>
 <div class="ht" style="left:50px;top:39px;font-size:13px">Starting a business</div>
 <div class="bk" style="left:50px;top:76px;width:12px;height:2px"></div><div class="b" style="left:65px;top:76px;width:110px;height:1px;background:#ccc"></div>
 <div class="x" style="left:50px;top:95px;width:180px;height:97px">PHOTO</div>
 <div class="hl" style="left:243px;top:122px;width:140px;line-height:10.5px">How to Go Big on YouTube: Lessons From a Fountain Pen Company with 25 Million Views</div>
 <div class="x" style="left:52px;top:210px;width:113px;height:62px">PHOTO</div><div class="x" style="left:171px;top:210px;width:113px;height:62px">PHOTO</div><div class="x" style="left:290px;top:210px;width:113px;height:62px">PHOTO</div>
 <div class="bk" style="left:52px;top:280px;width:110px;height:2px"></div><div class="bk" style="left:52px;top:288px;width:45px;height:2px"></div><div class="b" style="left:52px;top:296px;width:105px;height:1px"></div><div class="b" style="left:52px;top:302px;width:100px;height:1px"></div>
 <div class="bk" style="left:171px;top:280px;width:110px;height:2px"></div><div class="bk" style="left:171px;top:288px;width:105px;height:2px"></div><div class="b" style="left:171px;top:296px;width:105px;height:1px"></div><div class="b" style="left:171px;top:302px;width:100px;height:1px"></div>
 <div class="x" style="left:52px;top:329px;width:113px;height:62px">PHOTO</div><div class="x" style="left:171px;top:329px;width:113px;height:62px">PHOTO</div>
 <div class="a" style="left:290px;top:327px;width:115px;height:96px;background:#f3f3f3"></div><div class="x" style="left:298px;top:333px;width:99px;height:44px"></div><div class="bk" style="left:315px;top:387px;width:65px;height:1px"></div><div class="btn" style="left:328px;top:397px;width:36px;height:10px"></div>
 <div class="bk" style="left:52px;top:398px;width:110px;height:2px"></div><div class="bk" style="left:52px;top:406px;width:110px;height:2px"></div><div class="b" style="left:52px;top:414px;width:105px;height:1px"></div>
 <div class="bk" style="left:171px;top:398px;width:110px;height:2px"></div><div class="bk" style="left:171px;top:406px;width:60px;height:2px"></div><div class="b" style="left:171px;top:414px;width:105px;height:1px"></div>
 <div class="a" style="left:310px;top:125px;width:100px;height:169px;background:#5b5b5b;border-radius:3px;box-shadow:0 1px 3px #666"></div>
 <div class="a" style="left:310px;top:140px;width:100px;text-align:center;color:#fff;font-size:6px;line-height:8px">Have a payroll, HR,<br>or benefits question?</div>
 <div class="wh" style="left:316px;top:157px;width:88px;height:14px"></div>
 <div class="wh" style="left:316px;top:184px;width:88px;height:80px"></div>
 <div class="b" style="left:330px;top:191px;width:60px;height:1px"></div><div class="b" style="left:330px;top:208px;width:60px;height:1px"></div><div class="b" style="left:330px;top:228px;width:50px;height:1px"></div><div class="b" style="left:330px;top:245px;width:60px;height:1px"></div>
 <div class="a" style="left:318px;top:272px;width:8px;height:8px;border-radius:50%;background:#888"></div><div class="b" style="left:330px;top:273px;width:70px;height:1px;background:#999"></div><div class="b" style="left:330px;top:277px;width:55px;height:1px;background:#999"></div>
</div>

<!-- FRAME 3 row2 minimized -->
<div class="fr" style="left:1020px;top:705px;width:453px;height:317px">
 <div class="logo" style="left:48px;top:5px">Gusto</div><div class="b" style="left:297px;top:11px;width:35px;height:1px"></div><div class="btn" style="left:353px;top:7px;width:50px;height:9px"></div>
 <div class="bb" style="left:48px;top:25px;width:30px;height:1px"></div><div class="bb" style="left:84px;top:25px;width:30px;height:1px"></div><div class="bb" style="left:120px;top:25px;width:30px;height:1px"></div><div class="bb" style="left:156px;top:25px;width:30px;height:1px"></div><div class="bb" style="left:310px;top:25px;width:93px;height:1px"></div>
 <div class="hero" style="top:33px;height:81px"></div>
 <div class="ht" style="left:50px;top:45px;font-size:13px">Starting a business</div>
 <div class="x" style="left:50px;top:77px;width:203px;height:107px"></div>
 <div class="hl" style="left:50px;top:193px;width:200px;font-size:7.5px">How to Go Big on YouTube: Lessons From a Fountain Pen Company with 25 Million Views</div>
 <div class="b" style="left:50px;top:218px;width:110px;height:1px"></div><div class="b" style="left:50px;top:223px;width:150px;height:1px"></div><div class="bb" style="left:50px;top:232px;width:60px;height:1px"></div>
 <div class="card" style="left:265px;top:77px;width:132px;height:176px"></div>
 <div class="bk" style="left:276px;top:86px;width:26px;height:2px"></div><div class="b" style="left:276px;top:94px;width:90px;height:1px"></div>
 <div class="wh" style="left:276px;top:103px;width:110px;height:15px"></div>
 <div class="wh" style="left:276px;top:131px;width:110px;height:92px"></div>
 <div class="b" style="left:295px;top:138px;width:80px;height:1px"></div><div class="b" style="left:295px;top:160px;width:85px;height:1px"></div><div class="b" style="left:295px;top:182px;width:65px;height:1px"></div><div class="b" style="left:295px;top:202px;width:75px;height:1px"></div>
 <div class="bb" style="left:286px;top:233px;width:90px;height:1px"></div>
 <div class="x" style="left:50px;top:271px;width:113px;height:60px">PHOTO</div><div class="x" style="left:169px;top:271px;width:113px;height:60px">PHOTO</div><div class="x" style="left:288px;top:271px;width:113px;height:60px">PHOTO</div>
 <div class="a" style="left:441px;top:0;width:12px;height:114px;background:#5a5a5a"></div><div class="a" style="left:441px;top:114px;width:12px;height:203px;background:#ddd"></div>
 <div class="a" style="left:355px;top:45px;width:74px;height:24px;background:#555"></div><div class="b" style="left:365px;top:53px;width:55px;height:1px;background:#aaa"></div><div class="b" style="left:370px;top:59px;width:45px;height:1px;background:#aaa"></div>
 <div class="a" style="left:438px;top:50px;width:13px;height:13px;border-radius:50%;background:#3a6cf4;color:#fff;font-size:8px;text-align:center;line-height:13px">?</div>
</div>

<!-- FRAME 3 row2 expanded -->
<div class="fr" style="left:1482px;top:705px;width:454px;height:317px">
 <div class="logo" style="left:48px;top:5px">Gusto</div>
 <div class="bb" style="left:48px;top:25px;width:30px;height:1px"></div><div class="bb" style="left:84px;top:25px;width:30px;height:1px"></div><div class="bb" style="left:120px;top:25px;width:30px;height:1px"></div><div class="bb" style="left:156px;top:25px;width:30px;height:1px"></div>
 <div class="hero" style="top:33px;height:81px"></div>
 <div class="ht" style="left:50px;top:45px;font-size:13px">Starting a business</div>
 <div class="x" style="left:50px;top:77px;width:203px;height:107px"></div>
 <div class="hl" style="left:50px;top:193px;width:200px;font-size:7.5px">How to Go Big on YouTube: Lessons From a Fountain Pen Company with 25 Million Views</div>
 <div class="b" style="left:50px;top:218px;width:110px;height:1px"></div><div class="b" style="left:50px;top:223px;width:150px;height:1px"></div><div class="bb" style="left:50px;top:232px;width:60px;height:1px"></div>
 <div class="x" style="left:50px;top:269px;width:113px;height:60px">PHOTO</div><div class="x" style="left:169px;top:269px;width:113px;height:60px">PHOTO</div>
 <div class="a" style="left:261px;top:0;width:193px;height:114px;background:#5a5a5a"></div><div class="a" style="left:261px;top:114px;width:193px;height:203px;background:#dcdcdc"></div>
 <div class="b" style="left:276px;top:12px;width:20px;height:1px;background:#fff"></div><div class="b" style="left:276px;top:20px;width:150px;height:1px;background:#999"></div>
 <div class="wh" style="left:275px;top:34px;width:166px;height:20px"></div><div class="bb" style="left:412px;top:43px;width:20px;height:1px"></div>
 <div class="wh" style="left:275px;top:66px;width:166px;height:196px"></div>
 <div class="b" style="left:300px;top:74px;width:90px;height:1px"></div><div class="b" style="left:300px;top:98px;width:110px;height:1px"></div><div class="b" style="left:300px;top:121px;width:70px;height:1px"></div><div class="b" style="left:300px;top:142px;width:100px;height:1px"></div><div class="b" style="left:300px;top:167px;width:90px;height:1px"></div><div class="b" style="left:300px;top:191px;width:110px;height:1px"></div><div class="b" style="left:300px;top:216px;width:70px;height:1px"></div><div class="b" style="left:300px;top:237px;width:100px;height:1px"></div>
 <div class="a" style="left:275px;top:270px;width:166px;height:30px;background:#c8c8c8"></div><div class="bb" style="left:324px;top:284px;width:70px;height:1px"></div>
 <div class="a" style="left:254px;top:52px;width:13px;height:13px;border-radius:50%;background:#3a6cf4;color:#fff;font-size:7px;text-align:center;line-height:13px">›</div>
</div>

<!-- FRAME 3 row3 minimized -->
<div class="fr" style="left:1020px;top:1063px;width:453px;height:317px">
 <div class="logo" style="left:48px;top:5px">Gusto</div><div class="b" style="left:297px;top:11px;width:35px;height:1px"></div><div class="btn" style="left:353px;top:7px;width:50px;height:9px"></div>
 <div class="bb" style="left:48px;top:25px;width:30px;height:1px"></div><div class="bb" style="left:84px;top:25px;width:30px;height:1px"></div><div class="bb" style="left:120px;top:25px;width:30px;height:1px"></div><div class="bb" style="left:156px;top:25px;width:30px;height:1px"></div><div class="bb" style="left:310px;top:25px;width:93px;height:1px"></div>
 <div class="hero" style="top:33px;height:81px"></div>
 <div class="ht" style="left:50px;top:45px;font-size:13px">Starting a business</div>
 <div class="x" style="left:50px;top:77px;width:203px;height:107px"></div>
 <div class="hl" style="left:50px;top:193px;width:200px;font-size:7.5px">How to Go Big on YouTube: Lessons From a Fountain Pen Company with 25 Million Views</div>
 <div class="b" style="left:50px;top:218px;width:110px;height:1px"></div><div class="b" style="left:50px;top:223px;width:150px;height:1px"></div><div class="bb" style="left:50px;top:232px;width:60px;height:1px"></div>
 <div class="card" style="left:265px;top:77px;width:132px;height:176px"></div>
 <div class="bk" style="left:276px;top:86px;width:26px;height:2px"></div><div class="b" style="left:276px;top:94px;width:90px;height:1px"></div>
 <div class="wh" style="left:276px;top:103px;width:110px;height:15px"></div>
 <div class="wh" style="left:276px;top:131px;width:110px;height:92px"></div>
 <div class="b" style="left:295px;top:138px;width:80px;height:1px"></div><div class="b" style="left:295px;top:160px;width:85px;height:1px"></div><div class="b" style="left:295px;top:182px;width:65px;height:1px"></div><div class="b" style="left:295px;top:202px;width:75px;height:1px"></div>
 <div class="bb" style="left:286px;top:233px;width:90px;height:1px"></div>
 <div class="x" style="left:50px;top:271px;width:113px;height:60px">PHOTO</div><div class="x" style="left:169px;top:271px;width:113px;height:60px">PHOTO</div><div class="x" style="left:288px;top:271px;width:113px;height:60px">PHOTO</div>
 <div class="wh" style="left:440px;top:77px;width:14px;height:66px;border:1px solid #ccc;box-shadow:0 0 2px #bbb"></div>
 <div class="a" style="left:442px;top:118px;width:9px;height:9px;border-radius:50%;background:#3a6cf4"></div>
</div>

<!-- FRAME 3 row3 expanded -->
<div class="fr" style="left:1482px;top:1063px;width:454px;height:317px">
 <div class="logo" style="left:48px;top:5px">Gusto</div>
 <div class="bb" style="left:48px;top:25px;width:30px;height:1px"></div><div class="bb" style="left:84px;top:25px;width:30px;height:1px"></div><div class="bb" style="left:120px;top:25px;width:30px;height:1px"></div><div class="bb" style="left:156px;top:25px;width:30px;height:1px"></div>
 <div class="hero" style="top:33px;height:81px"></div>
 <div class="ht" style="left:50px;top:45px;font-size:13px">Starting a business</div>
 <div class="x" style="left:50px;top:77px;width:203px;height:107px"></div>
 <div class="hl" style="left:50px;top:193px;width:200px;font-size:7.5px">How to Go Big on YouTube: Lessons From a Fountain Pen Company with 25 Million Views</div>
 <div class="b" style="left:50px;top:218px;width:110px;height:1px"></div><div class="b" style="left:50px;top:223px;width:150px;height:1px"></div><div class="bb" style="left:50px;top:232px;width:60px;height:1px"></div>
 <div class="x" style="left:50px;top:269px;width:113px;height:60px">PHOTO</div><div class="x" style="left:169px;top:269px;width:113px;height:60px">PHOTO</div>
 <div class="a" style="left:261px;top:0;width:193px;height:317px;background:#e4e4e4"></div>
 <div class="bk" style="left:276px;top:16px;width:20px;height:1px"></div><div class="b" style="left:276px;top:25px;width:150px;height:1px"></div>
 <div class="wh" style="left:275px;top:39px;width:166px;height:20px"></div><div class="bb" style="left:412px;top:49px;width:20px;height:1px"></div>
 <div class="wh" style="left:275px;top:66px;width:166px;height:196px"></div>
 <div class="b" style="left:300px;top:74px;width:90px;height:1px"></div><div class="b" style="left:300px;top:98px;width:110px;height:1px"></div><div class="b" style="left:300px;top:121px;width:70px;height:1px"></div><div class="b" style="left:300px;top:142px;width:100px;height:1px"></div><div class="b" style="left:300px;top:167px;width:90px;height:1px"></div><div class="b" style="left:300px;top:191px;width:110px;height:1px"></div><div class="b" style="left:300px;top:216px;width:70px;height:1px"></div><div class="b" style="left:300px;top:237px;width:100px;height:1px"></div>
 <div class="a" style="left:275px;top:270px;width:166px;height:30px;background:#d6d6d6"></div><div class="bb" style="left:324px;top:284px;width:70px;height:1px"></div>
 <div class="wh" style="left:250px;top:77px;width:12px;height:66px;border:1px solid #ccc"></div>
 <div class="a" style="left:251px;top:118px;width:9px;height:9px;border-radius:50%;background:#3a6cf4"></div>
</div>

<!-- scrollbar -->
<div class="a" style="left:2464px;top:1020px;width:5px;height:555px;border-radius:3px;background:#b5b5b5"></div>

<!-- right panel -->
<div class="a" style="left:2483px;top:110px;width:317px;height:1526px;background:#fafafa;border-left:1px solid #e0e0e0"></div>
<div class="a" style="left:2583px;top:110px;width:217px;height:41px;border-left:1px solid #ddd;border-bottom:1px solid #ddd"></div>
<div class="a" style="left:2503px;top:123px;font-size:13px;font-weight:bold;letter-spacing:1.3px;color:#333">DESIGN</div>
<div class="a" style="left:2603px;top:123px;font-size:13px;font-weight:bold;letter-spacing:1.3px;color:#aaa">PROTOTYPE</div>
<div class="a" style="left:2740px;top:123px;font-size:13px;font-weight:bold;letter-spacing:1.3px;color:#aaa">CODE</div>
<div class="sh" style="top:179px">PIXEL PREVIEW</div>
<div class="a" style="left:2501px;top:229px;width:19px;height:18px;border:1px solid #ccc;border-radius:3px;background:#fff"></div>
<div class="a" style="left:2529px;top:228px;font-size:14px;color:#333">Pixel Preview</div>
<div class="a" style="left:2728px;top:221px;width:59px;height:32px;border:1px solid #ddd;border-radius:2px;font-size:13px;color:#ccc;padding:8px 0 0 8px">1x &nbsp;&nbsp;⌄</div>
<div class="a" style="left:2501px;top:279px;width:19px;height:18px;border:1px solid #ccc;border-radius:3px;background:#fff;font-size:12px;text-align:center;line-height:17px;color:#333">✓</div>
<div class="a" style="left:2529px;top:279px;font-size:14px;color:#333">Pixel Grid</div>
<div class="a" style="left:2483px;top:322px;width:317px;height:1px;background:#e4e4e4"></div>
<div class="sh" style="top:349px">BACKGROUND</div>
<div class="a" style="left:2501px;top:391px;width:176px;height:33px;border:1px solid #ddd;border-radius:2px;background:#fff"></div>
<div class="a" style="left:2502px;top:392px;width:32px;height:31px;background:#e5e5e5;border-right:1px solid #ddd"></div>
<div class="a" style="left:2541px;top:399px;font-size:14px;color:#333">#E5E5E5</div>
<div class="a" style="left:2686px;top:391px;width:58px;height:33px;border:1px solid #ddd;border-radius:2px;background:#fff;font-size:14px;color:#333;padding:8px 0 0 7px">100%</div>
<svg class="a" style="left:2760px;top:398px" width="22" height="18"><path d="M2 9 Q11 1 20 9 Q11 17 2 9 Z" fill="none" stroke="#333" stroke-width="1.6"/><circle cx="11" cy="9" r="3" fill="#333"/></svg>
<div class="a" style="left:2483px;top:441px;width:317px;height:1px;background:#e4e4e4"></div>
<div class="sh" style="top:468px">LOCAL STYLES</div>
<div class="a" style="left:2501px;top:522px;width:3px;height:3px;background:#999;box-shadow:10px 0 0 #999,0 6px 0 #999,10px 6px 0 #999"></div>
<div class="a" style="left:2501px;top:557px;font-size:14px;line-height:26px;color:#aaa;width:290px">To create a style, select a layer and click on the style icon in the inspector panel.</div>
<div class="a" style="left:2483px;top:632px;width:317px;height:1px;background:#e4e4e4"></div>
<div class="sh" style="top:658px">EXPORT</div>
<div class="a" style="left:2758px;top:650px;font-size:24px;color:#333">+</div>
<div class="a" style="left:2501px;top:707px;font-size:14px;color:#aaa">Click + to add an export setting</div>

</body></html>
